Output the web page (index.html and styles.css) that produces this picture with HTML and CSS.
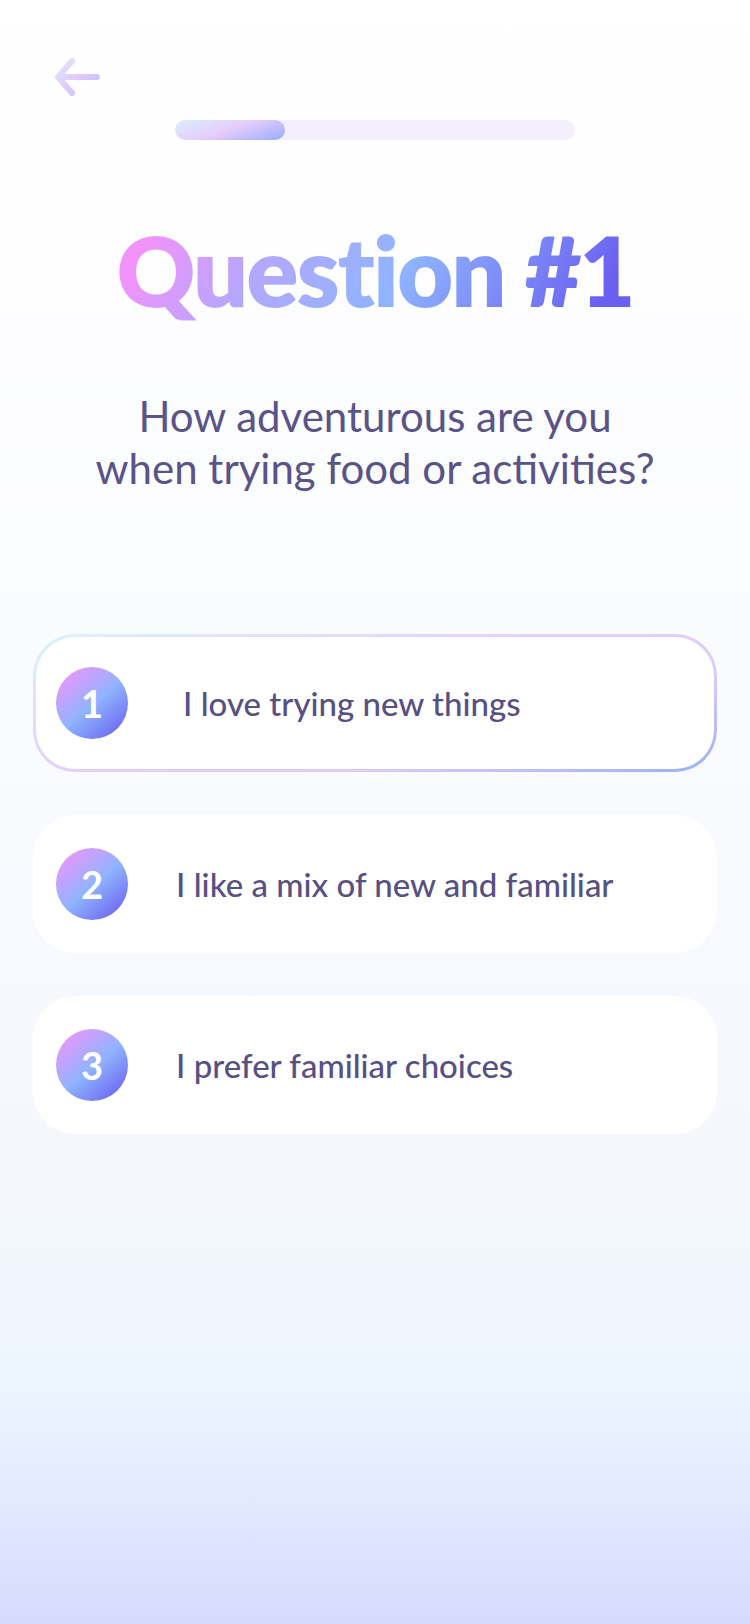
FILE: index.html
```html
<!DOCTYPE html>
<html lang="en">
<head>
<meta charset="utf-8">
<title>Question #1</title>
<link rel="stylesheet" href="styles.css">
</head>
<body>
<main class="screen">
  <header class="topbar">
    <button class="back" aria-label="Back">
      <svg width="46" height="40" viewBox="0 0 46 40">
        <defs>
          <linearGradient id="ag" x1="0" y1="0" x2="1" y2="1">
            <stop offset="0" stop-color="#dde6fd"/>
            <stop offset="0.5" stop-color="#e2cbfb"/>
            <stop offset="1" stop-color="#b8bdfb"/>
          </linearGradient>
        </defs>
        <path d="M17 3 L3 19 L17 35 M3 19 H42" fill="none" stroke="url(#ag)" stroke-width="6" stroke-linecap="round" stroke-linejoin="round"/>
      </svg>
    </button>
  </header>
  <div class="progress"><div class="progress-fill"></div></div>
  <h1 class="title">Question #1</h1>
  <p class="question">How adventurous are you<br>when trying food or activities?</p>
  <ul class="options">
    <li class="option selected"><span class="num">1</span><span class="label sel-label">I love trying new things</span></li>
    <li class="option"><span class="num">2</span><span class="label">I like a mix of new and familiar</span></li>
    <li class="option"><span class="num">3</span><span class="label">I prefer familiar choices</span></li>
  </ul>
</main>
</body>
</html>
```
FILE: styles.css
```css
* { box-sizing: border-box; }
html, body { margin: 0; padding: 0; }
body { font-family: "Lato", "Open Sans", sans-serif; }
.screen {
  width: 750px;
  height: 1624px;
  overflow: hidden;
  display: flex;
  flex-direction: column;
  align-items: center;
  background: linear-gradient(180deg, #ffffff 0%, #fbfcfe 35%, #f3f7fd 75%, #edf5fe 85%, #e2e8fe 93%, #d7dafe 100%);
}
.topbar {
  width: 100%;
  padding: 58px 0 0 55px;
  height: 120px;
}
.back {
  border: 0;
  background: none;
  padding: 0;
  display: block;
  cursor: pointer;
}
.progress {
  width: 400px;
  height: 20px;
  border-radius: 10px;
  background: #f3effd;
  overflow: hidden;
}
.progress-fill {
  width: 110px;
  height: 100%;
  border-radius: 10px;
  background: linear-gradient(160deg, #daf0fd 0%, #e5cbfb 50%, #97adfb 100%);
}
.title {
  margin: 70px 0 0;
  font-size: 97px;
  line-height: 120px;
  font-weight: 800;
  letter-spacing: -2px;
  background: linear-gradient(120deg, #f292fb 8%, #b3a8fd 30%, #8fb4ff 55%, #6a5ff0 92%);
  -webkit-background-clip: text;
  background-clip: text;
  color: transparent;
}
.question {
  margin: 60px 0 0;
  text-align: center;
  font-size: 42px;
  line-height: 52px;
  color: #5a5387;
  font-weight: 400;
}
.options {
  list-style: none;
  margin: 140px 0 0;
  padding: 0;
  width: 684px;
  display: flex;
  flex-direction: column;
  gap: 43px;
}
.option {
  height: 138px;
  border-radius: 42px;
  background: #ffffff;
  display: flex;
  align-items: center;
  padding-left: 23px;
}
.option.selected {
  border: 3px solid transparent;
  padding-left: 20px;
  background:
    linear-gradient(#ffffff, #ffffff) padding-box,
    linear-gradient(165deg, #ddf1fe 0%, #e4cffb 45%, #dccbf9 70%, #97b1fb 100%) border-box;
}
.num {
  width: 72px;
  height: 72px;
  border-radius: 50%;
  flex: none;
  display: flex;
  align-items: center;
  justify-content: center;
  color: #ffffff;
  font-size: 38px;
  font-weight: 700;
  background: linear-gradient(140deg, #f493fb 5%, #8fb4ff 52%, #6a5ff0 95%);
}
.label {
  margin-left: 48px;
  font-size: 33px;
  color: #575082;
  font-weight: 500;
}
.sel-label { margin-left: 55px; }
```
